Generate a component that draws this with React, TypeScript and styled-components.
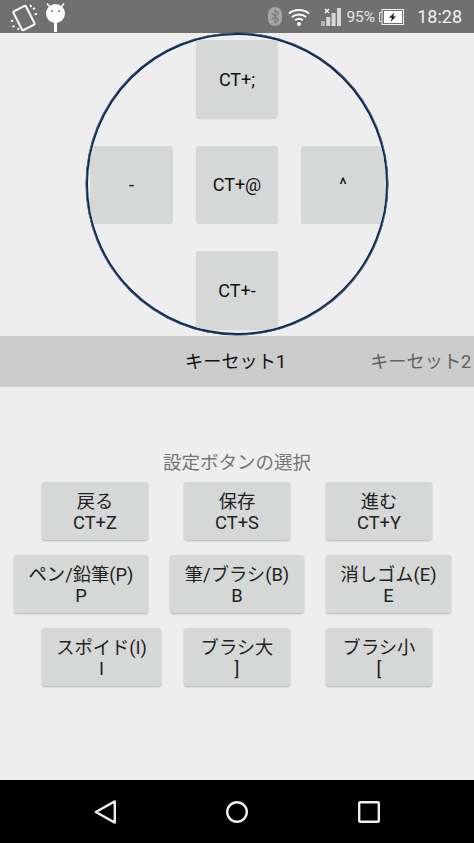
import React from 'react';
import styled, { createGlobalStyle } from 'styled-components';

const GlobalStyle = createGlobalStyle`
    html, body {
        margin: 0;
        padding: 0;
        background: #eeeeee;
    }
    * {
        box-sizing: border-box;
    }
`

const Screen = styled.div`
    width: 474px;
    height: 843px;
    display: flex;
    flex-direction: column;
    overflow: hidden;
    background: #eeeeee;
    font-family: Roboto, "Noto Sans CJK JP", sans-serif;
    font-size: 18px;
    color: #111;
`

const StatusBar = styled.div`
    height: 33px;
    flex-shrink: 0;
    display: flex;
    align-items: center;
    background: #707070;
    padding: 0 12px 0 9px;
`

const StatusLeft = styled.div`
    display: flex;
    align-items: center;
    gap: 6px;
`

const StatusRight = styled.div`
    display: flex;
    align-items: center;
    margin-left: auto;
`

const Percent = styled.span`
    font-size: 15.5px;
    color: #e4e4e4;
    margin: 0 3px 0 5px;
`

const Clock = styled.span`
    font-size: 18px;
    color: #f2f2f2;
    margin-left: 13px;
`

const Main = styled.div`
    flex: 1;
    display: flex;
    flex-direction: column;
`

const PadCircle = styled.div`
    width: 302px;
    height: 302px;
    margin: 0 auto;
    border: 2px solid #0f2e55;
    border-radius: 50%;
    box-shadow: 0 0 0 0.5px #0f2e55;
    overflow: hidden;
    padding: 5px 0 0 2px;
    display: grid;
    grid-template-columns: 83px 82px 84px;
    grid-template-rows: 78px 77px 78px;
    column-gap: 23px;
    row-gap: 28px;
    align-content: start;
`

const PadKey = styled.div<{ $col: number; $row: number }>`
    grid-column: ${p => p.$col};
    grid-row: ${p => p.$row};
    display: flex;
    align-items: center;
    justify-content: center;
    background: #d6d7d7;
    border-radius: 3px;
    box-shadow: 0 1px 1px rgba(0, 0, 0, 0.12);
`

const TabStrip = styled.div`
    height: 51px;
    margin-top: 1px;
    display: flex;
    align-items: center;
    gap: 84px;
    padding: 0 0 3px 185px;
    background: #cccccc;
    font-size: 18.2px;
    white-space: nowrap;
    overflow: hidden;
`

const Tab = styled.span<{ $active?: boolean }>`
    color: ${p => (p.$active ? '#111' : '#616161')};
`

const Heading = styled.div`
    margin-top: 64px;
    height: 24px;
    line-height: 24px;
    text-align: center;
    font-size: 18.5px;
    color: #757575;
`

const Rows = styled.div`
    margin-top: 7px;
    display: flex;
    flex-direction: column;
    gap: 15px;
`

const Row = styled.div<{ $left: number }>`
    display: flex;
    padding-left: ${p => p.$left}px;
`

const ActionButton = styled.div<{ $width: number; $after: number }>`
    width: ${p => p.$width}px;
    margin-right: ${p => p.$after}px;
    height: 58px;
    padding-top: 9px;
    line-height: 21px;
    font-size: 18.3px;
    text-align: center;
    white-space: nowrap;
    background: #d6d7d7;
    border-radius: 3px;
    box-shadow: 0 1px 2px rgba(0, 0, 0, 0.25);
    color: #222;
`

const NavBar = styled.div`
    height: 63px;
    flex-shrink: 0;
    display: flex;
    align-items: center;
    gap: 110px;
    padding-left: 94px;
    background: #000;
`

const VibrateIcon = () => (
    <svg width="30" height="30" viewBox="0 0 30 30" fill="none" stroke="#fff">
        <rect x="8" y="5.500" width="14" height="21" rx="1" strokeWidth="2" transform="rotate(-27 15 16)" />
        <path d="M21 3l1.500 2M26 6l-2 1.200M28 12l-2.500 .3M2 19l2.300-.3M3.500 25l2-1.300M9 28l.8-2" strokeWidth="1.800" />
    </svg>
)

const DebugIcon = () => (
    <svg width="21" height="30" viewBox="0 0 21 30" fill="#fff">
        <path d="M2 1.500l3.500 4M19 1.500l-3.500 4" stroke="#fff" strokeWidth="1.600" />
        <circle cx="10.500" cy="11.500" r="9.500" />
        <rect x="9" y="20" width="3" height="10" />
        <circle cx="7" cy="9" r="1" fill="#707070" />
        <circle cx="14" cy="9" r="1" fill="#707070" />
    </svg>
)

const BluetoothIcon = () => (
    <svg width="14" height="19" viewBox="0 0 14 19">
        <rect width="14" height="19" rx="7" fill="#a6a6a6" />
        <path d="M3.500 6l7 6.500-3.500 3.500V3l3.500 3.500-7 6.500" fill="none" stroke="#7d7d7d" strokeWidth="1.200" />
    </svg>
)

const WifiIcon = () => (
    <svg width="22" height="18" viewBox="0 0 22 18" fill="none" stroke="#fff" style={{ marginLeft: 6 }}>
        <path d="M1 5.500C6.500 .8 15.500 .8 21 5.500M4 9c4-3.400 10-3.400 14 0M7.200 12.300c2.300-1.800 5.300-1.800 7.600 0" strokeWidth="2" />
        <circle cx="11" cy="16" r="2" fill="#fff" stroke="none" />
    </svg>
)

const SignalIcon = () => (
    <svg width="20" height="18" viewBox="0 0 20 18" fill="#d8d8d8" style={{ marginLeft: 11 }}>
        <rect x="0" y="13" width="4" height="5" fill="#b5b5b5" />
        <rect x="5.300" y="9" width="4" height="9" />
        <rect x="10.600" y="5" width="4" height="13" />
        <rect x="16" y="0" width="4" height="18" />
        <path d="M4 1l4 4M8 1L4 5" stroke="#fff" strokeWidth="1.300" />
    </svg>
)

const BatteryIcon = () => (
    <svg width="26" height="16" viewBox="0 0 26 16" fill="none">
        <path d="M3.500 3.500H1.500v9h2" stroke="#e8e8e8" strokeWidth="1" />
        <rect x="4" y="0.500" width="21.500" height="15" stroke="#f2f2f2" strokeWidth="1" />
        <rect x="6" y="2" width="18" height="12" fill="#fff" />
        <path d="M16.500 3.500L11 8.800h3l-1.500 4L18 7.500h-3z" fill="#111" />
    </svg>
)

const BackIcon = () => (
    <svg width="22" height="24" viewBox="0 0 22 24" fill="none" stroke="#eeeeee" strokeWidth="2.400" strokeLinejoin="round">
        <path d="M20.800 1.400V22.600L1.800 12z" />
    </svg>
)

const HomeIcon = () => (
    <svg width="22" height="22" viewBox="0 0 22 22" fill="none" stroke="#eeeeee" strokeWidth="2.400">
        <circle cx="11" cy="11" r="9.800" />
    </svg>
)

const RecentIcon = () => (
    <svg width="22" height="22" viewBox="0 0 22 22" fill="none" stroke="#eeeeee" strokeWidth="2.400" strokeLinejoin="round">
        <rect x="1.200" y="1.200" width="19.600" height="19.600" rx="1" />
    </svg>
)

const padKeys = [
    { label: 'CT+;', col: 2, row: 1 },
    { label: '-', col: 1, row: 2 },
    { label: 'CT+@', col: 2, row: 2 },
    { label: '^', col: 3, row: 2 },
    { label: 'CT+-', col: 2, row: 3 },
]

const rows = [
    {
        left: 42,
        buttons: [
            { name: '戻る', key: 'CT+Z', width: 106, after: 36 },
            { name: '保存', key: 'CT+S', width: 106, after: 36 },
            { name: '進む', key: 'CT+Y', width: 106, after: 0 },
        ],
    },
    {
        left: 14,
        buttons: [
            { name: 'ペン/鉛筆(P)', key: 'P', width: 134, after: 22 },
            { name: '筆/ブラシ(B)', key: 'B', width: 134, after: 22 },
            { name: '消しゴム(E)', key: 'E', width: 125, after: 0 },
        ],
    },
    {
        left: 42,
        buttons: [
            { name: 'スポイド(I)', key: 'I', width: 119, after: 23 },
            { name: 'ブラシ大', key: ']', width: 106, after: 36 },
            { name: 'ブラシ小', key: '[', width: 106, after: 0 },
        ],
    },
]

export default function App() {
    return (
        <Screen>
            <GlobalStyle />
            <StatusBar>
                <StatusLeft>
                    <VibrateIcon />
                    <DebugIcon />
                </StatusLeft>
                <StatusRight>
                    <BluetoothIcon />
                    <WifiIcon />
                    <SignalIcon />
                    <Percent>95%</Percent>
                    <BatteryIcon />
                    <Clock>18:28</Clock>
                </StatusRight>
            </StatusBar>
            <Main>
                <PadCircle>
                    {padKeys.map(k => (
                        <PadKey key={k.label} $col={k.col} $row={k.row}>{k.label}</PadKey>
                    ))}
                </PadCircle>
                <TabStrip>
                    <Tab $active>キーセット1</Tab>
                    <Tab>キーセット2</Tab>
                </TabStrip>
                <Heading>設定ボタンの選択</Heading>
                <Rows>
                    {rows.map((row, i) => (
                        <Row key={i} $left={row.left}>
                            {row.buttons.map(b => (
                                <ActionButton key={b.name} $width={b.width} $after={b.after}>
                                    {b.name}<br />{b.key}
                                </ActionButton>
                            ))}
                        </Row>
                    ))}
                </Rows>
            </Main>
            <NavBar>
                <BackIcon />
                <HomeIcon />
                <RecentIcon />
            </NavBar>
        </Screen>
    )
}
